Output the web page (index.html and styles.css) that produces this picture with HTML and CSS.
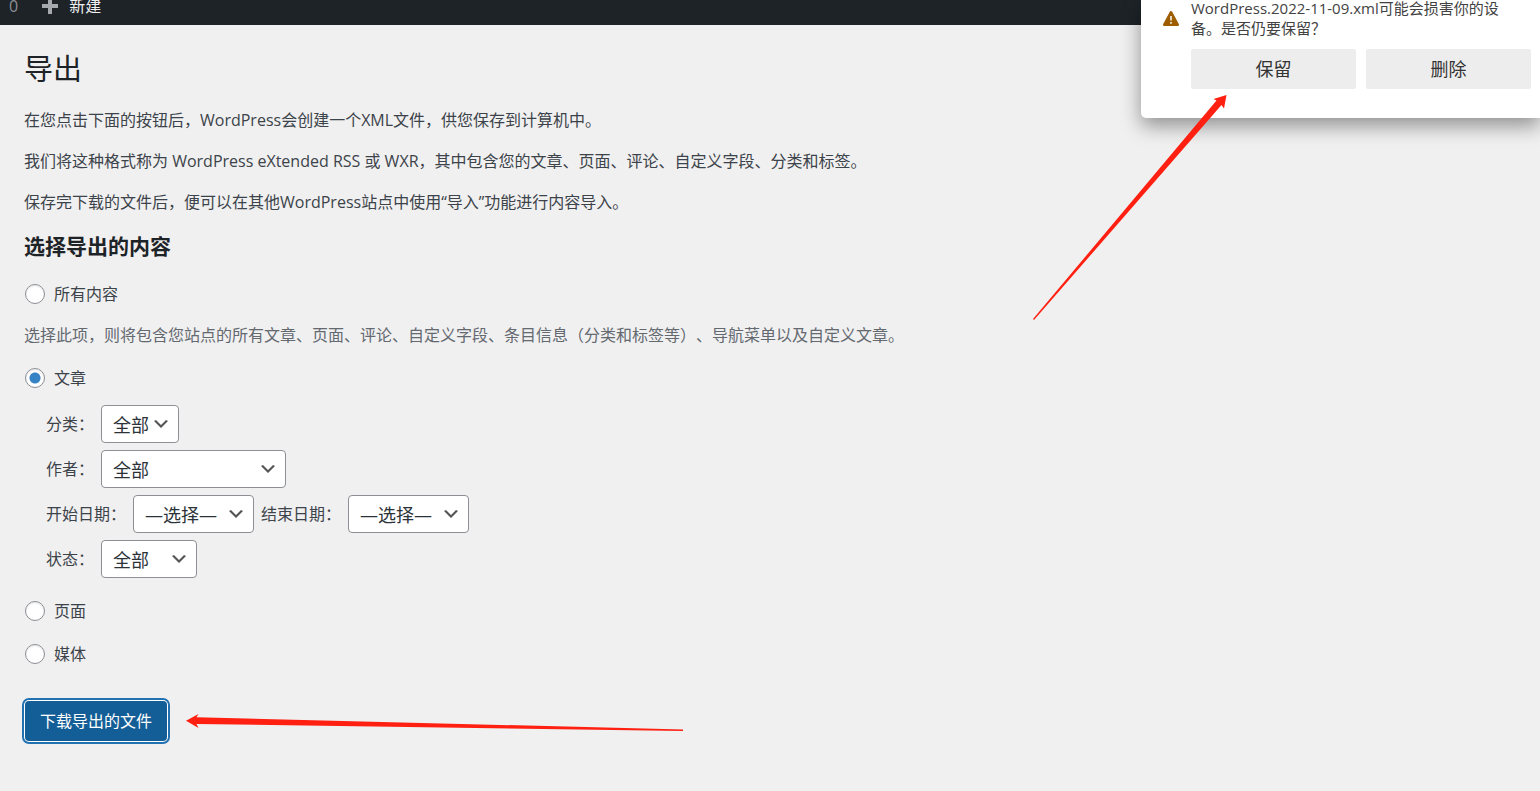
FILE: index.html
```html
<!DOCTYPE html>
<html lang="zh-CN">
<head>
  <meta charset="UTF-8">
  <meta name="viewport" content="width=device-width, initial-scale=1">
  <title>导出</title>
  <link rel="stylesheet" href="styles.css">
</head>

<body>

<header class="admin-bar">
  <span class="comment-count">0</span>
  <a class="new-link" href="#">
    <svg class="plus" viewBox="0 0 18 18" aria-hidden="true"><path d="M7 1h4v6h6v4h-6v6H7v-6H1V7h6z" fill="#a7aaad"/></svg>
    新建
  </a>
</header>

<main class="wrap">
  <h1>导出</h1>
  <p>在您点击下面的按钮后，WordPress会创建一个XML文件，供您保存到计算机中。</p>
  <p>我们将这种格式称为 WordPress eXtended RSS 或 WXR，其中包含您的文章、页面、评论、自定义字段、分类和标签。</p>
  <p>保存完下载的文件后，便可以在其他WordPress站点中使用“导入”功能进行内容导入。</p>

  <h2>选择导出的内容</h2>
  <form class="export-form" onsubmit="return false">
    <label class="choice"><input type="radio" name="content" value="all">所有内容</label>
    <p class="description">选择此项，则将包含您站点的所有文章、页面、评论、自定义字段、条目信息（分类和标签等）、导航菜单以及自定义文章。</p>

    <label class="choice"><input type="radio" name="content" value="posts" checked>文章</label>
    <div class="filters">
      <div class="filter">
        <label for="cat">分类：</label>
        <select id="cat" class="select-small"><option>全部</option></select>
      </div>
      <div class="filter">
        <label for="author">作者：</label>
        <select id="author" class="select-wide"><option>全部</option></select>
      </div>
      <div class="filter">
        <label for="start-date">开始日期：</label>
        <select id="start-date" class="select-date"><option>—选择—</option></select>
        <label for="end-date">结束日期：</label>
        <select id="end-date" class="select-date"><option>—选择—</option></select>
      </div>
      <div class="filter">
        <label for="status">状态：</label>
        <select id="status" class="select-status"><option>全部</option></select>
      </div>
    </div>

    <label class="choice"><input type="radio" name="content" value="pages">页面</label>
    <label class="choice"><input type="radio" name="content" value="media">媒体</label>

    <button class="button-primary" type="submit">下载导出的文件</button>
  </form>
</main>

<aside class="download-popup">
  <svg class="warning" viewBox="0 0 16 15" aria-hidden="true">
    <path d="M8 0c.6 0 1 .3 1.200.7l6.600 12.300c.5 1-.1 2-1.200 2H1.400C.3 15-.3 14 .2 13L6.800.7C7 .3 7.400 0 8 0z" fill="#9d5d00"/>
    <path d="M8 5v4.500M8 11v1.700" stroke="#fff" stroke-width="1.500"/>
  </svg>
  <div class="download-body">
    <div class="download-text">WordPress.2022-11-09.xml可能会损害你的设备。是否仍要保留？</div>
    <div class="download-actions">
      <button type="button">保留</button>
      <button type="button">删除</button>
    </div>
  </div>
</aside>

<svg class="arrow arrow-keep" viewBox="0 0 196 226" aria-hidden="true">
  <path d="M194.500 1L181.500 5l3 1.500L1 225l1 1L189.500 11l2.500 3.500z" fill="#ff2012"/>
</svg>
<svg class="arrow arrow-download" viewBox="0 0 498 16" aria-hidden="true">
  <path d="M0 7.800L12.500 1l-2 3.200L497 16.500v1.500L10.500 11l2 4z" fill="#ff2012"/>
</svg>

</body>
</html>
```

FILE: styles.css
```css
* {
  box-sizing: border-box;
}
body {
  margin: 0;
  min-height: 100vh;
  overflow-x: hidden;
  position: relative;
  background: #f0f0f0;
  color: #3c434a;
  font-family: "Open Sans", "Noto Sans CJK SC", sans-serif;
  font-size: 16px;
  line-height: 24px;
  text-spacing-trim: space-all;
}
button, select {
  font-family: inherit;
}

/* admin bar */
.admin-bar {
  display: flex;
  align-items: center;
  gap: 23px;
  height: 25px;
  padding: 0 9px 13px;
  background: #1d2327;
  color: #8c8f94;
  line-height: 12px;
}
.new-link {
  display: flex;
  align-items: center;
  gap: 10px;
  color: #f0f0f1;
  text-decoration: none;
}
.plus {
  width: 18px;
  height: 18px;
}

/* page content */
.wrap {
  padding: 23px 24px 48px;
}
h1, h2 {
  margin: 0;
  color: #1d2327;
}
h1 {
  margin-bottom: 18px;
  font-size: 29px;
  font-weight: 400;
  line-height: 42px;
}
h2 {
  margin-bottom: 21px;
  font-size: 21px;
  line-height: 30px;
}
p {
  margin: 0 0 17px;
}
.export-form {
  display: flex;
  flex-direction: column;
  align-items: flex-start;
}
.choice {
  display: flex;
  align-items: center;
  gap: 9px;
  margin-bottom: 19px;
}
.choice input {
  appearance: none;
  width: 20px;
  height: 20px;
  margin: 0 0 0 1px;
  border: 1px solid #8c8f94;
  border-radius: 50%;
  background: #fff;
  box-shadow: inset 0 1px 2px rgba(0,0,0,0.1);
}
.choice input:checked {
  background: radial-gradient(circle, #3582c4 5px, #fff 6px);
}
p.description {
  margin: -2px 0 19px;
  color: #646970;
}

/* post filters */
.filters {
  display: flex;
  flex-direction: column;
  gap: 7px;
  margin: -4px 0 21px 22px;
}
.filter {
  display: flex;
  flex-wrap: wrap;
  align-items: center;
  gap: 7px;
}
select {
  appearance: none;
  height: 38px;
  padding: 1px 24px 0 11px;
  border: 1px solid #8c8f94;
  border-radius: 4px;
  background: #fff url('data:image/svg+xml,%3Csvg xmlns="http://www.w3.org/2000/svg" viewBox="0 0 20 20"%3E%3Cpath d="M5 6l5 5 5-5 2 1-7 7-7-7 2-1z" fill="%23555"/%3E%3C/svg%3E') no-repeat right 7px center / 20px 20px;
  color: #2c3338;
  font-size: 18px;
}
.select-small {
  width: 78px;
}
.select-wide {
  width: 185px;
}
.select-date {
  width: 121px;
}
.select-status {
  width: 96px;
}

.button-primary {
  height: 40px;
  margin: 16px 0 0 1px;
  padding: 0 15px 2px;
  border: 0;
  border-radius: 4px;
  background: #135e96;
  box-shadow: 0 0 0 1px #fff, 0 0 0 3px #2271b1;
  color: #fff;
  font-size: 16px;
}

/* browser download prompt */
.download-popup {
  position: absolute;
  top: 0;
  right: 0;
  display: flex;
  align-items: flex-start;
  gap: 12px;
  width: 399px;
  padding: 0 9px 29px 22px;
  border-radius: 0 0 0 5px;
  background: #fff;
  box-shadow: 0 8px 20px rgba(0,0,0,0.4);
  color: #424242;
}
.warning {
  flex: none;
  width: 16px;
  height: 15px;
  margin-top: 11px;
}
.download-body {
  flex: 1;
  margin-top: -2px;
}
.download-text {
  padding-right: 24px;
  font-size: 15px;
  line-height: 20px;
}
.download-actions {
  display: flex;
  gap: 10px;
  margin-top: 11px;
}
.download-actions button {
  flex: 1;
  height: 40px;
  padding: 0 0 2px;
  border: 0;
  border-radius: 2px;
  background: #ededed;
  color: #333;
  font-size: 18px;
}

/* pointer arrows */
.arrow {
  position: absolute;
  overflow: visible;
  pointer-events: none;
}
.arrow-keep {
  top: 94px;
  right: 312px;
  width: 196px;
  height: 226px;
}
.arrow-download {
  top: 713px;
  left: 186px;
  width: 498px;
  height: 16px;
}
```
